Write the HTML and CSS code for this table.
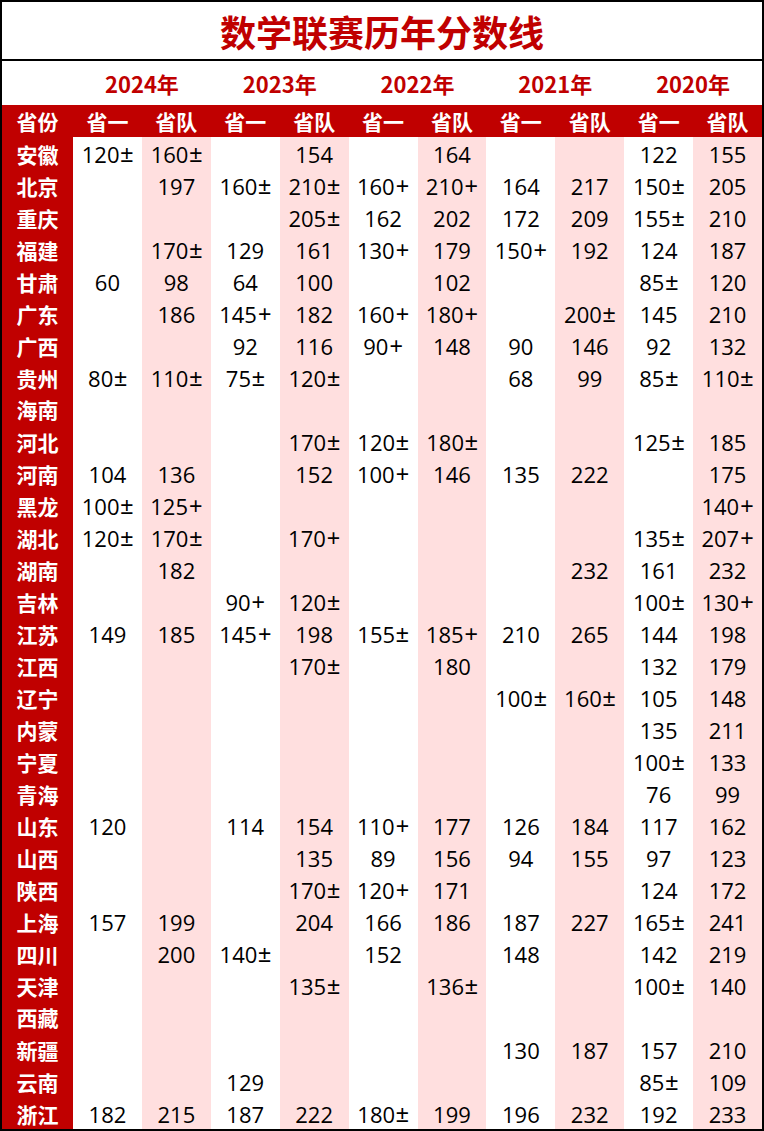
FILE: index.html
```html
<!DOCTYPE html>
<html lang="zh">
<head>
<meta charset="utf-8">
<title>数学联赛历年分数线</title>
<link rel="stylesheet" href="styles.css">
</head>
<body>
<div class="sheet">
  <div class="title">数学联赛历年分数线</div>
  <div class="years">
    <div></div>
    <div class="yr">2024年</div>
    <div class="yr">2023年</div>
    <div class="yr">2022年</div>
    <div class="yr">2021年</div>
    <div class="yr">2020年</div>
  </div>
  <div class="row head">
    <div>省份</div><div>省一</div><div>省队</div><div>省一</div><div>省队</div><div>省一</div><div>省队</div><div>省一</div><div>省队</div><div>省一</div><div>省队</div>
  </div>
  <div class="row"><div>安徽</div><div>120<span class="s">±</span></div><div>160<span class="s">±</span></div><div></div><div>154</div><div></div><div>164</div><div></div><div></div><div>122</div><div>155</div></div>
  <div class="row"><div>北京</div><div></div><div>197</div><div>160<span class="s">±</span></div><div>210<span class="s">±</span></div><div>160<span class="s">+</span></div><div>210<span class="s">+</span></div><div>164</div><div>217</div><div>150<span class="s">±</span></div><div>205</div></div>
  <div class="row"><div>重庆</div><div></div><div></div><div></div><div>205<span class="s">±</span></div><div>162</div><div>202</div><div>172</div><div>209</div><div>155<span class="s">±</span></div><div>210</div></div>
  <div class="row"><div>福建</div><div></div><div>170<span class="s">±</span></div><div>129</div><div>161</div><div>130<span class="s">+</span></div><div>179</div><div>150<span class="s">+</span></div><div>192</div><div>124</div><div>187</div></div>
  <div class="row"><div>甘肃</div><div>60</div><div>98</div><div>64</div><div>100</div><div></div><div>102</div><div></div><div></div><div>85<span class="s">±</span></div><div>120</div></div>
  <div class="row"><div>广东</div><div></div><div>186</div><div>145<span class="s">+</span></div><div>182</div><div>160<span class="s">+</span></div><div>180<span class="s">+</span></div><div></div><div>200<span class="s">±</span></div><div>145</div><div>210</div></div>
  <div class="row"><div>广西</div><div></div><div></div><div>92</div><div>116</div><div>90<span class="s">+</span></div><div>148</div><div>90</div><div>146</div><div>92</div><div>132</div></div>
  <div class="row"><div>贵州</div><div>80<span class="s">±</span></div><div>110<span class="s">±</span></div><div>75<span class="s">±</span></div><div>120<span class="s">±</span></div><div></div><div></div><div>68</div><div>99</div><div>85<span class="s">±</span></div><div>110<span class="s">±</span></div></div>
  <div class="row"><div>海南</div><div></div><div></div><div></div><div></div><div></div><div></div><div></div><div></div><div></div><div></div></div>
  <div class="row"><div>河北</div><div></div><div></div><div></div><div>170<span class="s">±</span></div><div>120<span class="s">±</span></div><div>180<span class="s">±</span></div><div></div><div></div><div>125<span class="s">±</span></div><div>185</div></div>
  <div class="row"><div>河南</div><div>104</div><div>136</div><div></div><div>152</div><div>100<span class="s">+</span></div><div>146</div><div>135</div><div>222</div><div></div><div>175</div></div>
  <div class="row"><div>黑龙</div><div>100<span class="s">±</span></div><div>125<span class="s">+</span></div><div></div><div></div><div></div><div></div><div></div><div></div><div></div><div>140<span class="s">+</span></div></div>
  <div class="row"><div>湖北</div><div>120<span class="s">±</span></div><div>170<span class="s">±</span></div><div></div><div>170<span class="s">+</span></div><div></div><div></div><div></div><div></div><div>135<span class="s">±</span></div><div>207<span class="s">+</span></div></div>
  <div class="row"><div>湖南</div><div></div><div>182</div><div></div><div></div><div></div><div></div><div></div><div>232</div><div>161</div><div>232</div></div>
  <div class="row"><div>吉林</div><div></div><div></div><div>90<span class="s">+</span></div><div>120<span class="s">±</span></div><div></div><div></div><div></div><div></div><div>100<span class="s">±</span></div><div>130<span class="s">+</span></div></div>
  <div class="row"><div>江苏</div><div>149</div><div>185</div><div>145<span class="s">+</span></div><div>198</div><div>155<span class="s">±</span></div><div>185<span class="s">+</span></div><div>210</div><div>265</div><div>144</div><div>198</div></div>
  <div class="row"><div>江西</div><div></div><div></div><div></div><div>170<span class="s">±</span></div><div></div><div>180</div><div></div><div></div><div>132</div><div>179</div></div>
  <div class="row"><div>辽宁</div><div></div><div></div><div></div><div></div><div></div><div></div><div>100<span class="s">±</span></div><div>160<span class="s">±</span></div><div>105</div><div>148</div></div>
  <div class="row"><div>内蒙</div><div></div><div></div><div></div><div></div><div></div><div></div><div></div><div></div><div>135</div><div>211</div></div>
  <div class="row"><div>宁夏</div><div></div><div></div><div></div><div></div><div></div><div></div><div></div><div></div><div>100<span class="s">±</span></div><div>133</div></div>
  <div class="row"><div>青海</div><div></div><div></div><div></div><div></div><div></div><div></div><div></div><div></div><div>76</div><div>99</div></div>
  <div class="row"><div>山东</div><div>120</div><div></div><div>114</div><div>154</div><div>110<span class="s">+</span></div><div>177</div><div>126</div><div>184</div><div>117</div><div>162</div></div>
  <div class="row"><div>山西</div><div></div><div></div><div></div><div>135</div><div>89</div><div>156</div><div>94</div><div>155</div><div>97</div><div>123</div></div>
  <div class="row"><div>陕西</div><div></div><div></div><div></div><div>170<span class="s">±</span></div><div>120<span class="s">+</span></div><div>171</div><div></div><div></div><div>124</div><div>172</div></div>
  <div class="row"><div>上海</div><div>157</div><div>199</div><div></div><div>204</div><div>166</div><div>186</div><div>187</div><div>227</div><div>165<span class="s">±</span></div><div>241</div></div>
  <div class="row"><div>四川</div><div></div><div>200</div><div>140<span class="s">±</span></div><div></div><div>152</div><div></div><div>148</div><div></div><div>142</div><div>219</div></div>
  <div class="row"><div>天津</div><div></div><div></div><div></div><div>135<span class="s">±</span></div><div></div><div>136<span class="s">±</span></div><div></div><div></div><div>100<span class="s">±</span></div><div>140</div></div>
  <div class="row"><div>西藏</div><div></div><div></div><div></div><div></div><div></div><div></div><div></div><div></div><div></div><div></div></div>
  <div class="row"><div>新疆</div><div></div><div></div><div></div><div></div><div></div><div></div><div>130</div><div>187</div><div>157</div><div>210</div></div>
  <div class="row"><div>云南</div><div></div><div></div><div>129</div><div></div><div></div><div></div><div></div><div></div><div>85<span class="s">±</span></div><div>109</div></div>
  <div class="row"><div>浙江</div><div>182</div><div>215</div><div>187</div><div>222</div><div>180<span class="s">±</span></div><div>199</div><div>196</div><div>232</div><div>192</div><div>233</div></div>
</div>
</body>
</html>
```

FILE: styles.css
```css
html, body {
  margin: 0;
  padding: 0;
  background: #ffffff;
}

.sheet {
  width: 764px;
  height: 1131px;
  box-sizing: border-box;
  border: 2px solid #000000;
  overflow: hidden;
  font-family: "Open Sans", "Noto Sans CJK SC", sans-serif;
}

.title {
  height: 57px;
  border-bottom: 2px solid #000000;
  display: flex;
  align-items: center;
  justify-content: center;
  font-family: "Noto Sans CJK SC", sans-serif;
  font-weight: 700;
  font-size: 36px;
  color: #c00000;
}

.years {
  height: 44px;
  display: grid;
  grid-template-columns: 71px repeat(5, 1fr);
  align-items: center;
}

.yr {
  text-align: center;
  font-family: "Noto Sans CJK SC", sans-serif;
  font-weight: 700;
  font-size: 22px;
  color: #c00000;
  line-height: 44px;
}

.row {
  height: 32px;
  display: grid;
  grid-template-columns: 71px repeat(10, 1fr);
}

.row > div {
  display: flex;
  align-items: center;
  justify-content: center;
  font-size: 22px;
  color: #000000;
  line-height: 32px;
  padding-top: 1px;
  box-sizing: border-box;
}

.row > div:nth-child(odd) {
  background: #ffdfdf;
}

.row > div:first-child {
  background: #c00000;
  color: #ffffff;
  font-family: "Noto Sans CJK SC", sans-serif;
  font-weight: 700;
  font-size: 21px;
  padding-top: 0;
}

.head > div,
.head > div:nth-child(odd) {
  background: #c00000;
  color: #ffffff;
  font-family: "Noto Sans CJK SC", sans-serif;
  font-weight: 700;
  font-size: 21px;
  padding-top: 0;
}

.s {
  font-family: "Liberation Sans", sans-serif;
  font-size: 23px;
  margin-left: 1px;
}
```
